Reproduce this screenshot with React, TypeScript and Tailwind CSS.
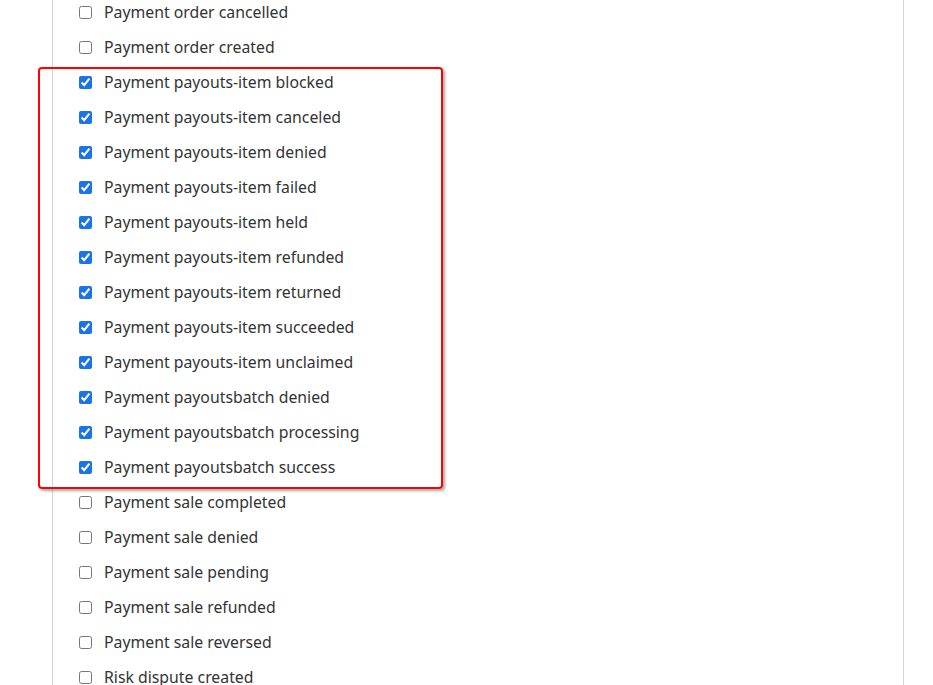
import React from "react";

const items: [string, boolean][] = [
  ["Payment order cancelled", false],
  ["Payment order created", false],
  ["Payment payouts-item blocked", true],
  ["Payment payouts-item canceled", true],
  ["Payment payouts-item denied", true],
  ["Payment payouts-item failed", true],
  ["Payment payouts-item held", true],
  ["Payment payouts-item refunded", true],
  ["Payment payouts-item returned", true],
  ["Payment payouts-item succeeded", true],
  ["Payment payouts-item unclaimed", true],
  ["Payment payoutsbatch denied", true],
  ["Payment payoutsbatch processing", true],
  ["Payment payoutsbatch success", true],
  ["Payment sale completed", false],
  ["Payment sale denied", false],
  ["Payment sale pending", false],
  ["Payment sale refunded", false],
  ["Payment sale reversed", false],
  ["Risk dispute created", false],
];

export default function App() {
  return (
    <div className="h-[685px] w-[933px] overflow-hidden bg-white" style={{ fontFamily: '"Noto Sans", sans-serif' }}>
      <div className="relative ml-[52px] w-[852px] h-[800px] border-x border-[#d4d4d4] -mt-[5px]">
        <div className="flex flex-col pl-[26px]">
          {items.map(([label, checked]) => (
            <label key={label} className="flex h-[35px] items-center text-[15.8px] text-[#333]">
              <input type="checkbox" defaultChecked={checked} className="m-0 h-[13px] w-[13px] accent-[#1a73e8]" />
              <span className="ml-[12px]">{label}</span>
            </label>
          ))}
        </div>
        <div className="pointer-events-none absolute left-[-15px] top-[72px] h-[422px] w-[405px] rounded-[4px] border-2 border-[#ff0000] shadow-[2px_2px_3px_rgba(0,0,0,0.35)]" />
      </div>
    </div>
  );
}
